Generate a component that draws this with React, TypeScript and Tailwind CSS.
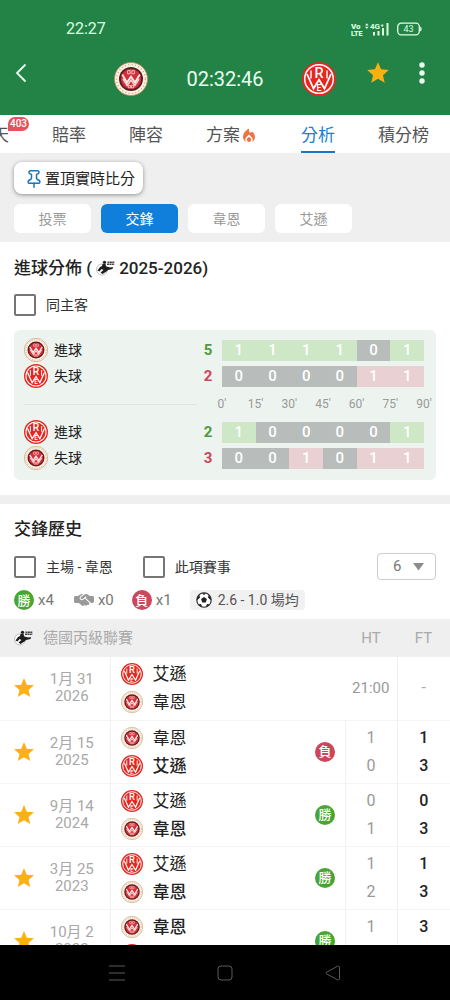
import clsx from "clsx";
import { Pin } from "lucide-react";
import { FaHandshakeSimple } from "react-icons/fa6";
import { MdLocalFireDepartment, MdStar } from "react-icons/md";

type Team = "wehen" | "essen";
type Result = "win" | "loss";

interface Match {
  day: string;
  year: string;
  teams: [Team, Team];
  winner?: Team;
  result?: Result;
  kickoff?: string;
  ht?: [number, number];
  ft?: [number, number];
}

const teamNames = {
  wehen: "韋恩",
  essen: "艾遜",
};

const subTabs = ["投票", "交鋒", "韋恩", "艾遜"];

const goalRows: { team: Team; label: string; total: number; scored: boolean; cells: number[] }[] = [
  { team: "wehen", label: "進球", total: 5, scored: true, cells: [1, 1, 1, 1, 0, 1] },
  { team: "essen", label: "失球", total: 2, scored: false, cells: [0, 0, 0, 0, 1, 1] },
  { team: "essen", label: "進球", total: 2, scored: true, cells: [1, 0, 0, 0, 0, 1] },
  { team: "wehen", label: "失球", total: 3, scored: false, cells: [0, 0, 1, 0, 1, 1] },
];

const minutes = ["0'", "15'", "30'", "45'", "60'", "75'", "90'"];

const matches: Match[] = [
  { day: "1月 31", year: "2026", teams: ["essen", "wehen"], kickoff: "21:00" },
  { day: "2月 15", year: "2025", teams: ["wehen", "essen"], winner: "essen", result: "loss", ht: [1, 0], ft: [1, 3] },
  { day: "9月 14", year: "2024", teams: ["essen", "wehen"], winner: "wehen", result: "win", ht: [0, 1], ft: [0, 3] },
  { day: "3月 25", year: "2023", teams: ["essen", "wehen"], winner: "wehen", result: "win", ht: [1, 2], ft: [1, 3] },
  { day: "10月 2", year: "2022", teams: ["wehen", "essen"], winner: "wehen", result: "win", ht: [1, 0], ft: [3, 0] },
];

const WehenLogo = ({ className }: { className?: string }) => (
  <svg viewBox="0 0 34 34" className={className} aria-hidden="true">
    <circle cx="17" cy="17" r="16.5" fill="#fbf3e2" stroke="#b98a60" strokeWidth="0.8" />
    <circle cx="17" cy="17" r="14.4" fill="none" stroke="#d9a888" strokeWidth="1.4" strokeDasharray="1.2 2.2" />
    <circle cx="17" cy="17" r="12" fill="#5d1a22" />
    <circle cx="17" cy="17" r="10.2" fill="#d3303c" />
    <path d="M8.2 12.5l4.8 8 4-6 4 6 4.800-8" fill="none" stroke="#fdeeea" strokeWidth="1.8" />
    <path d="M9 17l4.200 6.400 3.800-5.400 3.800 5.400L25 17" fill="none" stroke="#fbd6d2" strokeWidth="1.5" />
    <path d="M13.6 8.600h2.600v3.200h-2.600zM17.800 8.600h2.600v3.200h-2.600zM14.400 23.400h2.100v2.400h-2.100zM17.500 23.400h2.100v2.400h-2.100z" fill="none" stroke="#f8c8c3" strokeWidth="0.9" />
  </svg>
);

const EssenLogo = ({ className }: { className?: string }) => (
  <svg viewBox="0 0 34 34" className={className} aria-hidden="true">
    <circle cx="17" cy="17" r="17" fill="#e5281f" />
    <circle cx="17" cy="17" r="14.3" fill="none" stroke="#fff" strokeWidth="1.5" />
    <path d="M5 12l6.500 14.500L17 17.800l5.500 8.700L29 12" fill="none" stroke="#fff" strokeWidth="1.8" />
    <path d="M9 8.500v8M25 8.500v8" stroke="#fff" strokeWidth="1.4" />
    <text x="17" y="16" textAnchor="middle" fontSize="14.500" fontWeight="500" fill="#fff">R</text>
    <text x="17" y="29" textAnchor="middle" fontSize="9" fontWeight="500" fill="#fff">E</text>
  </svg>
);

const TeamLogo = ({ team, className }: { team: Team; className?: string }) =>
  team === "wehen" ? <WehenLogo className={className} /> : <EssenLogo className={className} />;

const LeagueIcon = () => (
  <svg viewBox="0 0 38 32" className="h-4 w-[19px] shrink-0" aria-hidden="true">
    <circle cx="12" cy="19" r="11" fill="#fff" stroke="#999" strokeWidth="1.2" />
    <path d="M13 8l6-1 1 6 9 2 5-1-1 4-9 2-3 3-8 5-4-3 6-5-4-2-4 5-4-2 5-7 4-2z" fill="#1d1d1d" />
    <circle cx="17" cy="4.500" r="3.200" fill="#1d1d1d" />
    <path d="M23 4.500h14M22 8.500h15" stroke="#444" strokeWidth="2.600" strokeDasharray="4 0.800" />
  </svg>
);

const BallIcon = () => (
  <svg viewBox="0 0 16 16" className="size-4" fill="#222" aria-hidden="true">
    <circle cx="8" cy="8" r="7.200" fill="#fff" stroke="#222" strokeWidth="1.100" />
    <path d="M8 5l2.900 2.100-1.100 3.400H6.200L5.100 7.100z" />
    <path d="M5.600 1.200h4.800L8 3zM1 6.500l2.400-3.800.6 2.800L1.300 8.200zM15 6.500l-2.400-3.800-.6 2.800 2.700 2.700zM2.600 12.300l2.400-.4 1.200 2.900-1.600-.6zM13.400 12.300l-2.400-.4-1.200 2.900 1.600-.6z" />
  </svg>
);

const ResultBadge = ({ result }: { result: Result }) => (
  <span
    className={clsx(
      "inline-flex size-5 items-center justify-center rounded-full text-[13px] leading-none font-medium text-white",
      result === "win" ? "bg-[#4aa432]" : "bg-[#cb4759]"
    )}
  >
    {result === "win" ? "勝" : "負"}
  </span>
);

const Checkbox = ({ label }: { label: string }) => (
  <label className="flex items-center gap-2.5 text-sm text-[#333]">
    <input type="checkbox" className="size-[22px] appearance-none rounded-xs border-2 border-[#757575] bg-white checked:bg-[#0f7fdb]" />
    {label}
  </label>
);

const StatusBar = () => (
  <div className="flex h-4 items-center justify-between pr-7 pl-[66px] text-[#dcffe2]">
    <span className="text-base leading-4">22:27</span>
    <div className="flex items-center gap-2">
      <svg viewBox="0 0 38 14" className="h-3.5 w-[38px]" fill="currentColor" aria-hidden="true">
        <text x="0" y="6.500" fontSize="8" fontWeight="900">Vo</text>
        <text x="0" y="13.500" fontSize="7" fontWeight="900">LTE</text>
        <path d="M14 3.400l1.800-2.200 1.800 2.200zM14 4.800l1.800 2.200 1.800-2.200z" />
        <text x="19" y="7" fontSize="8" fontWeight="700">4G</text>
        <text x="29.500" y="5" fontSize="6" fontWeight="700">+</text>
        <path d="M22 10h2v3.400h-2zM26.500 9h2v4.400h-2zM31 6h2v7.400h-2zM35.500 1h2v12.400h-2z" />
      </svg>
      <svg viewBox="0 0 25 14" className="h-3.5 w-[25px]" aria-hidden="true">
        <rect x="0.700" y="1.200" width="21.600" height="11.600" rx="3.500" fill="none" stroke="currentColor" strokeWidth="1.300" />
        <path d="M23.200 4.500q1.500 0.500 1.500 2.500t-1.500 2.500z" fill="currentColor" />
        <text x="11.500" y="10.200" textAnchor="middle" fontSize="9" fill="currentColor">43</text>
      </svg>
    </div>
  </div>
);

const Header = () => (
  <header className="bg-[#238347] pt-[21px] pb-[19px] text-[#eafff0]">
    <StatusBar />
    <div className="mt-[25px] grid grid-cols-[1fr_auto_1fr] items-start">
      <div className="flex h-[21px] items-center pl-[15px]">
        <button type="button" aria-label="返回">
          <svg viewBox="0 0 12 20" className="h-5 w-3" fill="none" stroke="currentColor" strokeWidth="1.8" aria-hidden="true">
            <path d="M10.500 1.500L2 10l8.500 8.500" />
          </svg>
        </button>
      </div>
      <div className="flex items-center gap-[38px]">
        <WehenLogo className="size-[34px]" />
        <span className="text-xl leading-none">02:32:46</span>
        <EssenLogo className="size-[34px]" />
      </div>
      <div className="flex h-[21px] items-center justify-end gap-7 pr-[25px]">
        <button type="button" aria-label="收藏">
          <MdStar className="size-[26px] text-[#fdb010]" />
        </button>
        <button type="button" aria-label="更多">
          <svg viewBox="0 0 6 22" className="h-[22px] w-1.5" fill="currentColor" aria-hidden="true">
            <circle cx="3" cy="3" r="2.700" />
            <circle cx="3" cy="11" r="2.700" />
            <circle cx="3" cy="19" r="2.700" />
          </svg>
        </button>
      </div>
    </div>
  </header>
);

const Tabs = () => (
  <nav className="overflow-hidden bg-white">
    <div className="-ml-[25px] flex h-[38px] items-stretch gap-[43px] text-[17px] whitespace-nowrap text-[#555]">
      <a href="#chat" className="relative flex items-center pt-1">
        聊天
        <span className="absolute top-0.5 left-[33px] rounded-full rounded-bl-none bg-[#e8505b] px-0.5 text-[10px] leading-[14px] font-medium text-white">
          403
        </span>
      </a>
      <a href="#odds" className="flex items-center pt-1">賠率</a>
      <a href="#lineup" className="flex items-center pt-1">陣容</a>
      <a href="#tips" className="flex items-center pt-1">
        方案
        <MdLocalFireDepartment className="size-[18px] text-[#ee7343]" />
      </a>
      <a href="#analysis" className="flex items-center border-b-2 border-[#1a76c0] pt-1.5 text-[#1a7fd0]">分析</a>
      <a href="#table" className="flex items-center pt-1">積分榜</a>
    </div>
  </nav>
);

const SubTabs = () => (
  <div className="bg-[#efefef] px-3.5 pt-[9px] pb-[9px]">
    <button type="button" className="flex h-8 items-center gap-px rounded-lg bg-white pt-0.5 pr-2 pl-2.5 text-[15px] text-[#222] shadow-[0_1px_4px_rgba(0,0,0,0.4)]">
      <Pin className="size-5 text-[#1b74b8]" strokeWidth={1.8} />
      置頂實時比分
    </button>
    <div className="mt-2.5 flex gap-2.5">
      {subTabs.map((tab) => (
        <button
          key={tab}
          type="button"
          className={clsx(
            "h-[29px] w-[77px] rounded-md text-sm",
            tab === "交鋒" ? "bg-[#0f7fdb] text-white" : "bg-white text-[#999]"
          )}
        >
          {tab}
        </button>
      ))}
    </div>
  </div>
);

const GoalRow = ({ row }: { row: (typeof goalRows)[number] }) => (
  <div className="flex h-[26px] items-center">
    <div className="flex flex-1 items-center gap-1.5 text-sm text-[#222]">
      <TeamLogo team={row.team} className="size-6" />
      {row.label}
    </div>
    <span className={clsx("w-7 text-center text-[15px] font-bold", row.scored ? "text-[#4e9a3c]" : "text-[#d04459]")}>
      {row.total}
    </span>
    <div className="grid w-[202px] grid-cols-6 text-center text-[15px] leading-[21px] font-medium text-white">
      {row.cells.map((cell, i) => (
        <span key={i} className={cell === 0 ? "bg-[#b8bcba]" : row.scored ? "bg-[#cde7c7]" : "bg-[#e9d0d2]"}>
          {cell}
        </span>
      ))}
    </div>
  </div>
);

const GoalDistribution = () => (
  <section className="px-3.5 pt-3.5 pb-[15px]">
    <h2 className="flex items-center text-[17px] leading-6 font-medium text-[#222]">
      進球分佈 (
      <span className="mx-1 flex">
        <LeagueIcon />
      </span>
      2025-2026)
    </h2>
    <div className="mt-3.5">
      <Checkbox label="同主客" />
    </div>
    <div className="mt-3.5 rounded-md bg-[#edf3ef] pt-[7px] pr-3 pb-[9px] pl-2.5">
      <GoalRow row={goalRows[0]} />
      <GoalRow row={goalRows[1]} />
      <div className="flex h-[30px] items-center">
        <div className="mr-[25px] h-px flex-1 bg-[#dde3df]" />
        <div className="flex w-[202px] justify-between text-xs text-[#999]">
          {minutes.map((minute) => (
            <span key={minute} className="flex w-0 justify-center">{minute}</span>
          ))}
        </div>
      </div>
      <GoalRow row={goalRows[2]} />
      <GoalRow row={goalRows[3]} />
    </div>
  </section>
);

const MatchRow = ({ match }: { match: Match }) => (
  <tr className="h-[63px] border-b border-[#f4f4f4]">
    <td>
      <button type="button" aria-label="收藏" className="flex w-full justify-center">
        <MdStar className="size-6 text-[#fdb015]" />
      </button>
    </td>
    <td className="border-r border-[#f0f0f0] pr-3.5 text-center text-[15px] leading-[17px] text-[#a8a8a8]">
      {match.day}
      <br />
      {match.year}
    </td>
    <td className="pl-2.5">
      {match.teams.map((team) => (
        <div key={team} className={clsx("flex h-7 items-center gap-2.5 text-[17px] leading-7 text-[#222]", match.winner === team && "font-medium")}>
          <TeamLogo team={team} className="size-[22px]" />
          {teamNames[team]}
        </div>
      ))}
    </td>
    <td>
      <span className="flex">{match.result && <ResultBadge result={match.result} />}</span>
    </td>
    <td className={clsx("text-center text-[#999]", match.ht ? "border-l border-[#f0f0f0] text-base leading-7" : "text-[15px]")}>
      {match.ht ? match.ht.map((goals, i) => <div key={i}>{goals}</div>) : match.kickoff}
    </td>
    <td className="border-l border-[#f0f0f0] text-center text-base leading-7 font-medium text-[#222]">
      {match.ft ? match.ft.map((goals, i) => <div key={i}>{goals}</div>) : <span className="font-normal text-[#aaa]">-</span>}
    </td>
  </tr>
);

const History = () => (
  <section className="pt-[13px]">
    <h2 className="px-3.5 text-[17px] leading-6 font-medium text-[#222]">交鋒歷史</h2>
    <div className="mt-3 flex items-center gap-[30px] px-3.5">
      <Checkbox label="主場 - 韋恩" />
      <Checkbox label="此項賽事" />
      <div className="relative ml-auto">
        <select aria-label="場數" defaultValue="6" className="h-[27px] w-[59px] appearance-none rounded-sm border border-[#ccc] bg-white pl-[15px] text-[15px] text-[#777]">
          <option>6</option>
          <option>10</option>
          <option>20</option>
        </select>
        <svg viewBox="0 0 11 8" className="pointer-events-none absolute top-[10px] right-3 h-2 w-[11px]" fill="#8c8c8c" aria-hidden="true">
          <path d="M0 0h11L5.500 7.500z" />
        </svg>
      </div>
    </div>
    <div className="mt-2.5 flex h-5 items-center px-3.5 text-[15px] text-[#777]">
      <ResultBadge result="win" />
      <span className="ml-1">x4</span>
      <FaHandshakeSimple className="ml-5 size-5 text-[#999]" />
      <span className="ml-1">x0</span>
      <span className="ml-[18px] flex">
        <ResultBadge result="loss" />
      </span>
      <span className="ml-1">x1</span>
      <span className="ml-[18px] flex h-5 items-center gap-1.5 rounded-sm bg-[#f1f1f1] px-1.5 text-sm text-[#555]">
        <BallIcon />
        2.6 - 1.0 場均
      </span>
    </div>
    <table className="mt-[9px] w-full table-fixed">
      <colgroup>
        <col className="w-12" />
        <col className="w-[62px]" />
        <col />
        <col className="w-[30px]" />
        <col className="w-[52px]" />
        <col className="w-[53px]" />
      </colgroup>
      <thead>
        <tr className="h-[38px] bg-[#efefef] text-[15px] text-[#aaa]">
          <th colSpan={4} className="pl-3.5 text-left font-normal">
            <span className="flex items-center gap-2.5">
              <LeagueIcon />
              德國丙級聯賽
            </span>
          </th>
          <th className="font-normal">HT</th>
          <th className="font-normal">FT</th>
        </tr>
      </thead>
      <tbody>
        {matches.map((match) => (
          <MatchRow key={match.year} match={match} />
        ))}
      </tbody>
    </table>
  </section>
);

const SystemNav = () => (
  <footer className="flex h-[55px] shrink-0 items-center justify-center gap-[92px] bg-black text-[#5a5a5a]">
    <svg viewBox="0 0 16 16" className="size-4" fill="none" stroke="currentColor" aria-hidden="true">
      <path d="M0 1h16M0 8h16M0 15h16" />
    </svg>
    <svg viewBox="0 0 16 16" className="size-4" fill="none" stroke="currentColor" aria-hidden="true">
      <rect x="1" y="1" width="14" height="14" rx="3" />
    </svg>
    <svg viewBox="0 0 16 16" className="size-4" fill="none" stroke="currentColor" strokeLinejoin="round" aria-hidden="true">
      <path d="M1.500 7.200L12.500 1.200q1.800-.6 2 1v11.600q-.2 1.600-2 1L1.500 8.800q-.9-.8 0-1.600z" />
    </svg>
  </footer>
);

const App = () => {
  return (
    <div className="flex h-screen flex-col bg-white font-['Roboto','Noto_Sans_CJK_TC',sans-serif]">
      <Header />
      <Tabs />
      <main className="min-h-0 flex-1 overflow-hidden">
        <SubTabs />
        <GoalDistribution />
        <div className="h-[9px] bg-[#efefef]" />
        <History />
      </main>
      <SystemNav />
    </div>
  );
};

export default App;
